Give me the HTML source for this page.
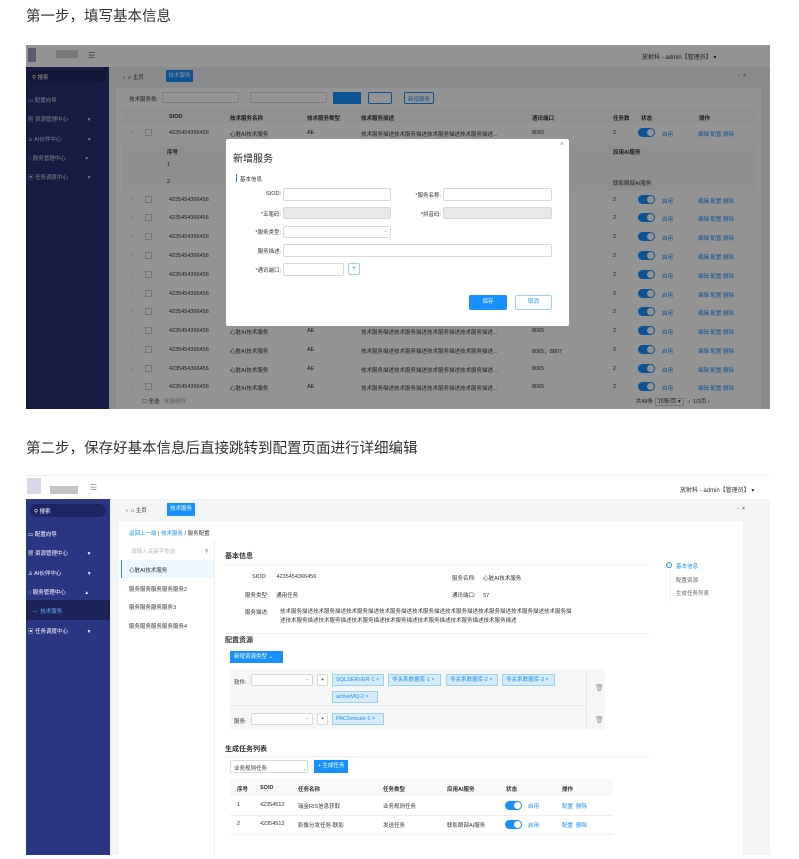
<!DOCTYPE html>
<html><head><meta charset="utf-8">
<style>
*{margin:0;padding:0;box-sizing:border-box}
body{width:799px;height:859px;background:#fff;font-family:"Liberation Sans","Noto Sans CJK SC",sans-serif;position:relative;overflow:hidden;color:#333}
.a{position:absolute;white-space:nowrap}
.s{font-size:5.5px;color:#333}
.step{font-size:14.5px;color:#333}
.blue{color:#1890ff}
.inp{position:absolute;border:1px solid #d9d9d9;background:#fff;border-radius:2px}
.tog{position:absolute;width:17px;height:9px;border-radius:5px;background:#1890ff}
.tog:after{content:"";position:absolute;right:1px;top:1px;width:7px;height:7px;border-radius:50%;background:#fff}
.tag{position:absolute;height:12px;background:#d6ebfb;border:1px solid #9ccff5;color:#1890ff;font-size:5.5px;line-height:10px;padding-left:3px;white-space:nowrap}
</style></head><body>

<div class="a step" style="left:26px;top:5px">第一步，填写基本信息</div>

<!-- TOP SCREENSHOT -->
<div class="a" style="left:26px;top:45px;width:744px;height:364px;background:#f0f2f5;overflow:hidden">
  <div class="a" style="left:0;top:0;width:744px;height:22px;background:#fff"></div>
  <div class="a" style="left:2px;top:3px;width:8px;height:14px;background:#9aa0c8"></div>
  <div class="a" style="left:30px;top:5px;width:22px;height:8px;background:#cfcfcf"></div>
  <div class="a s" style="left:62px;top:6px;font-size:8px;color:#666">☰</div>
  <div class="a s" style="left:616px;top:7px;font-size:6px">放射科 - admin【管理员】 ▾</div>
  <div class="a" style="left:0;top:22px;width:83px;height:342px;background:#283070"></div>
  <div class="a" style="left:2px;top:25px;width:78px;height:13px;border-radius:6px;background:#1f265e"></div>
  <div class="a s" style="left:6px;top:28px;color:#fff">⚲ 搜索</div>
  <div class="a s" style="left:2px;top:51px;color:#dde">▭ 配置向导</div>
  <div class="a s" style="left:2px;top:70px;color:#dde">▦ 资源管理中心 <span style="margin-left:18px">▾</span></div>
  <div class="a s" style="left:2px;top:90px;color:#dde">♙ AI伙伴中心 <span style="margin-left:25px">▾</span></div>
  <div class="a s" style="left:2px;top:109px;color:#dde">◌ 服务管理中心 <span style="margin-left:18px">▾</span></div>
  <div class="a s" style="left:2px;top:128px;color:#dde">▣ 任务调度中心 <span style="margin-left:18px">▾</span></div>
  <!-- tabs -->
  <div class="a" style="left:83px;top:22px;width:661px;height:19px;background:#eef0f3"></div>
  <div class="a s" style="left:97px;top:28px">‹ &nbsp;⌂ 主页</div>
  <div class="a" style="left:140px;top:25px;width:27px;height:12px;background:#1890ff;color:#fff;font-size:5.5px;line-height:12px;text-align:center">技术服务</div>
  <div class="a s" style="left:712px;top:28px">- &nbsp;×</div>
  <!-- content -->
  <div class="a" style="left:90px;top:43px;width:645px;height:321px;background:#fff"></div>
  <div class="a s" style="left:103px;top:50px">技术服务类:</div>
  <div class="inp" style="left:136px;top:47px;width:77px;height:11px"></div>
  <div class="inp" style="left:224px;top:47px;width:77px;height:11px"></div>
  <div class="a" style="left:307px;top:47px;width:28px;height:12px;background:#1890ff"></div>
  <div class="inp" style="left:342px;top:47px;width:24px;height:12px;border-color:#1890ff"></div>
  <div class="inp" style="left:378px;top:47px;width:30px;height:12px;border-color:#1890ff"></div>
  <div class="a s" style="left:382px;top:50px;color:#1890ff">新增服务</div>
  <div class="a" style="left:96px;top:64px;width:634px;height:14px;background:#fafafa"></div>
  <div class="a s" style="left:103px;top:69px;font-weight:bold">
    <span style="position:absolute;left:40px">SIOD</span><span style="position:absolute;left:101px">技术服务名称</span><span style="position:absolute;left:178px">技术服务类型</span><span style="position:absolute;left:232px">技术服务描述</span><span style="position:absolute;left:403px">通讯端口</span><span style="position:absolute;left:484px">任务数</span><span style="position:absolute;left:512px">状态</span><span style="position:absolute;left:570px">操作</span></div>
  <div class="a" style="left:96px;top:100px;width:634px;height:46px;background:#f7f7f7"></div>
  <div id="rows"></div>
  <div class="a s" style="left:116px;top:352px">☐ 全选 &nbsp; <span style="color:#aaa">批量删除</span></div>
  <div class="a s" style="left:610px;top:352px">共48条 <span style="border:1px solid #ccc;padding:0 2px">15条/页 ▾</span> &nbsp; ‹ &nbsp;1/3页 ›</div>
  <!-- overlay -->
  <div class="a" style="left:0;top:0;width:744px;height:364px;background:rgba(0,0,0,0.42)"></div>
</div>

<!-- Modal -->
<div class="a" style="left:226px;top:139px;width:343px;height:187px;background:#fff;border-radius:2px">
  <div class="a" style="left:7px;top:11px;font-size:10px;color:#222">新增服务</div>
  <div class="a" style="left:334px;top:2px;font-size:7px;color:#999">×</div>
  <div class="a" style="left:10px;top:35px;width:1px;height:8px;background:#1890ff"></div>
  <div class="a s" style="left:14px;top:36px">基本信息</div>
  <div class="a s" style="left:32px;top:52px;width:23px;text-align:right">SIOD:</div>
  <div class="inp" style="left:57px;top:49px;width:108px;height:13px"></div>
  <div class="a s" style="left:180px;top:52px;width:35px;text-align:right">*服务名称:</div>
  <div class="inp" style="left:217px;top:49px;width:109px;height:13px"></div>
  <div class="a s" style="left:20px;top:71px;width:35px;text-align:right">*五笔码:</div>
  <div class="inp" style="left:57px;top:68px;width:108px;height:12px;background:#e8e8e8"></div>
  <div class="a s" style="left:180px;top:71px;width:35px;text-align:right">*拼音码:</div>
  <div class="inp" style="left:217px;top:68px;width:109px;height:12px;background:#e8e8e8"></div>
  <div class="a s" style="left:18px;top:89px;width:37px;text-align:right">*服务类型:</div>
  <div class="inp" style="left:57px;top:87px;width:108px;height:12px"></div>
  <div class="a s" style="left:157px;top:89px;color:#999">⌄</div>
  <div class="a s" style="left:18px;top:108px;width:37px;text-align:right">服务描述:</div>
  <div class="inp" style="left:57px;top:105px;width:269px;height:13px"></div>
  <div class="a s" style="left:18px;top:127px;width:37px;text-align:right">*通讯端口:</div>
  <div class="inp" style="left:57px;top:124px;width:61px;height:13px"></div>
  <div class="inp" style="left:122px;top:124px;width:12px;height:12px;border-color:#9ccff5;font-size:6px;text-align:center;line-height:10px;color:#1890ff">+</div>
  <div class="a" style="left:243px;top:156px;width:38px;height:15px;background:#1890ff;border-radius:2px;color:#fff;font-size:5.5px;line-height:15px;text-align:center">保存</div>
  <div class="inp" style="left:289px;top:156px;width:37px;height:15px;border-color:#9ccff5;color:#1890ff;font-size:5.5px;line-height:13px;text-align:center">取消</div>
</div>

<div class="a step" style="left:26px;top:437px">第二步，保存好基本信息后直接跳转到配置页面进行详细编辑</div>

<!-- BOTTOM SCREENSHOT -->
<div class="a" style="left:26px;top:475px;width:744px;height:380px;background:#fff;overflow:hidden;border-top:1px solid #eee">
  <div class="a" style="left:1px;top:2px;width:14px;height:16px;background:#d8d8e8"></div>
  <div class="a" style="left:24px;top:10px;width:28px;height:8px;background:#c4c4c4"></div>
  <div class="a" style="left:64px;top:7px;font-size:8px;color:#888">☰</div>
  <div class="a s" style="left:654px;top:9px;font-size:6px">放射科 - admin【管理员】 ▾</div>
  <div class="a" style="left:0;top:23px;width:84px;height:357px;background:#2a3682"></div>
  <div class="a" style="left:4px;top:28px;width:76px;height:13px;border-radius:7px;background:#1d2563"></div>
  <div class="a s" style="left:8px;top:31px;color:#fff">⚲ 搜索</div>
  <div class="a s" style="left:2px;top:54px;color:#fff">▭ 配置向导</div>
  <div class="a s" style="left:2px;top:73px;color:#fff">▦ 资源管理中心 <span style="margin-left:18px">▾</span></div>
  <div class="a s" style="left:2px;top:93px;color:#fff">♙ AI伙伴中心 <span style="margin-left:25px">▾</span></div>
  <div class="a s" style="left:2px;top:112px;color:#fff">◌ 服务管理中心 <span style="margin-left:18px">▴</span></div>
  <div class="a" style="left:0;top:124px;width:84px;height:20px;background:#1c2358"></div>
  <div class="a s" style="left:6px;top:131px;color:#5fb0ff">-○ &nbsp;技术服务</div>
  <div class="a s" style="left:2px;top:151px;color:#fff">▣ 任务调度中心 <span style="margin-left:18px">▾</span></div>
  <div class="a" style="left:84px;top:23px;width:660px;height:20px;background:#f3f4f6"></div>
  <div class="a s" style="left:100px;top:30px">‹ &nbsp;⌂ 主页</div>
  <div class="a" style="left:141px;top:27px;width:28px;height:13px;background:#1890ff;color:#fff;font-size:5.5px;line-height:13px;text-align:center">技术服务</div>
  <div class="a s" style="left:711px;top:30px">- &nbsp;×</div>
  <div class="a" style="left:84px;top:43px;width:660px;height:337px;background:#f3f4f6"></div>
  <div class="a" style="left:93px;top:45px;width:624px;height:335px;background:#fff"></div>
  <div class="a s" style="left:103px;top:53px"><span class="blue">返回上一级</span> | <span class="blue">技术服务</span> / 服务配置</div>
  <div class="a" style="left:95px;top:64px;width:94px;height:316px;background:#fff;border-right:1px solid #eee"></div>
  <div class="a s" style="left:105px;top:71px;color:#bbb">请输入关键字查询 <span style="margin-left:28px;color:#888">⚲</span></div>
  <div class="a" style="left:95px;top:84px;width:93px;height:18px;background:#eef6fe;border-left:1px solid #1890ff"></div>
  <div class="a s" style="left:103px;top:90px">心脏AI技术服务</div>
  <div class="a s" style="left:103px;top:109px">服务服务服务服务服务2</div>
  <div class="a s" style="left:103px;top:127px">服务服务服务服务3</div>
  <div class="a s" style="left:103px;top:146px">服务服务服务服务服务4</div>
  <div class="a" style="left:199px;top:75px;font-size:7px;font-weight:bold">基本信息</div>
  <div class="a" style="left:199px;top:88px;width:424px;height:1px;background:#eee"></div>
  <div class="a s" style="left:226px;top:98px">SIOD: <span style="margin-left:8px">4235454366456</span></div>
  <div class="a s" style="left:426px;top:98px">服务名称: <span style="margin-left:6px">心脏AI技术服务</span></div>
  <div class="a s" style="left:219px;top:115px">服务类型: <span style="margin-left:6px">通用任务</span></div>
  <div class="a s" style="left:426px;top:115px">通讯端口: <span style="margin-left:6px">57</span></div>
  <div class="a s" style="left:219px;top:132px">服务描述:</div>
  <div class="a s" style="left:254px;top:132px;line-height:9px">技术服务描述技术服务描述技术服务描述技术服务描述技术服务描述技术服务描述技术服务描述技术服务描述技术服务描<br>述技术服务描述技术服务描述技术服务描述技术服务描述技术服务描述技术服务描述技术服务描述</div>
  <div class="a" style="left:199px;top:157px;width:424px;height:1px;background:#eee"></div>
  <div class="a" style="left:199px;top:159px;font-size:7px;font-weight:bold">配置资源</div>
  <div class="a" style="left:204px;top:175px;width:53px;height:12px;background:#1890ff;color:#fff;font-size:5.5px;line-height:12px;padding-left:4px">新增资源类型 ⌄</div>
  <div class="a" style="left:204px;top:193px;width:375px;height:61px;background:#f6f7f9"></div>
  <div class="a" style="left:560px;top:193px;width:1px;height:61px;background:#e8e8e8"></div>
  <div class="a" style="left:204px;top:229px;width:356px;height:1px;background:#e8e8e8"></div>
  <div class="a s" style="left:208px;top:202px">软件:</div>
  <div class="inp" style="left:225px;top:198px;width:62px;height:12px"></div>
  <div class="a s" style="left:279px;top:200px;color:#999">⌄</div>
  <div class="inp" style="left:291px;top:198px;width:11px;height:12px;font-size:5.5px;text-align:center;line-height:10px">+</div>
  <div class="tag" style="left:306px;top:198px;width:52px">SQLSERVER-1 ×</div>
  <div class="tag" style="left:362px;top:198px;width:53px">非关系数据库-1 ×</div>
  <div class="tag" style="left:420px;top:198px;width:52px">非关系数据库-2 ×</div>
  <div class="tag" style="left:476px;top:198px;width:53px">非关系数据库-3 ×</div>
  <div class="tag" style="left:306px;top:215px;width:46px">activeMQ-2 ×</div>
  <div class="a s" style="left:569px;top:208px;color:#999;font-size:7px">🗑</div>
  <div class="a s" style="left:208px;top:241px">服务:</div>
  <div class="inp" style="left:225px;top:237px;width:62px;height:12px"></div>
  <div class="a s" style="left:279px;top:239px;color:#999">⌄</div>
  <div class="inp" style="left:291px;top:237px;width:11px;height:12px;font-size:5.5px;text-align:center;line-height:10px">+</div>
  <div class="tag" style="left:306px;top:237px;width:52px">PACSmoule-1 ×</div>
  <div class="a s" style="left:569px;top:240px;color:#999;font-size:7px">🗑</div>
  <div class="a" style="left:199px;top:268px;font-size:7px;font-weight:bold">生成任务列表</div>
  <div class="a" style="left:199px;top:280px;width:424px;height:1px;background:#eee"></div>
  <div class="inp" style="left:204px;top:284px;width:78px;height:13px"></div>
  <div class="a s" style="left:208px;top:288px">业务规则任务 <span style="margin-left:34px;color:#999">⌄</span></div>
  <div class="a" style="left:288px;top:284px;width:34px;height:13px;background:#1890ff;color:#fff;font-size:5.5px;line-height:13px;text-align:center">+ 生成任务</div>
  <div class="a" style="left:204px;top:303px;width:383px;height:17px;background:#f7f8fa"></div>
  <div class="a s" style="left:211px;top:309px;font-weight:bold"><span style="position:absolute;left:0">序号</span><span style="position:absolute;left:23px">SOID</span><span style="position:absolute;left:61px">任务名称</span><span style="position:absolute;left:146px">任务类型</span><span style="position:absolute;left:210px">应用AI服务</span><span style="position:absolute;left:269px">状态</span><span style="position:absolute;left:325px">操作</span></div>
  <div class="a" style="left:204px;top:339px;width:383px;height:1px;background:#eee"></div>
  <div class="a" style="left:204px;top:358px;width:383px;height:1px;background:#eee"></div>
  <div class="a s" style="left:211px;top:326px"><span style="position:absolute;left:0">1</span><span style="position:absolute;left:23px">42354512</span><span style="position:absolute;left:61px">瑞金RIS信息获取</span><span style="position:absolute;left:146px">业务规则任务</span><span style="position:absolute;left:291px" class="blue">启用</span><span style="position:absolute;left:325px" class="blue">配置 &nbsp;删除</span></div>
  <div class="tog" style="left:479px;top:325px"></div>
  <div class="a s" style="left:211px;top:345px"><span style="position:absolute;left:0">2</span><span style="position:absolute;left:23px">42354513</span><span style="position:absolute;left:61px">影像分发任务-联影</span><span style="position:absolute;left:146px">发送任务</span><span style="position:absolute;left:210px">联影眼部AI服务</span><span style="position:absolute;left:291px" class="blue">启用</span><span style="position:absolute;left:325px" class="blue">配置 &nbsp;删除</span></div>
  <div class="tog" style="left:479px;top:344px"></div>
  <!-- anchor -->
  <div class="a" style="left:644px;top:84px;width:1px;height:42px;background:#eee"></div>
  <div class="a" style="left:640px;top:86px;width:6px;height:6px;border:1.5px solid #1890ff;border-radius:50%;background:#fff"></div>
  <div class="a s" style="left:650px;top:86px;color:#1890ff">基本信息</div>
  <div class="a s" style="left:650px;top:100px;color:#666">配置资源</div>
  <div class="a s" style="left:650px;top:113px;color:#666">生成任务列表</div>
</div>

<script>
(function(){
var c=document.getElementById('rows'),h='';
var ys=[133,200,218,237,256,275,294,312,331,350,369,387];
for(var i=0;i<ys.length;i++){
 var y=ys[i]-45-3;
 h+='<div class="a s" style="left:105px;top:'+y+'px;color:#999">›</div><div class="a" style="left:119px;top:'+(y-1)+'px;width:7px;height:7px;border:1px solid #ccc;background:#fff"></div>';
 h+='<div class="a s" style="left:143px;top:'+y+'px">4235454366456</div>';
 h+='<div class="a s" style="left:204px;top:'+y+'px">心脏AI技术服务</div><div class="a s" style="left:281px;top:'+y+'px">AE</div><div class="a s" style="left:335px;top:'+y+'px">技术服务描述技术服务描述技术服务描述技术服务描述...</div><div class="a s" style="left:506px;top:'+y+'px">'+(i==9?'8065，8807':'8065')+'</div>';
 h+='<div class="a s" style="left:587px;top:'+y+'px">2</div><div class="tog" style="left:612px;top:'+(y-2)+'px"></div><div class="a s blue" style="left:636px;top:'+y+'px">启用</div><div class="a s blue" style="left:672px;top:'+y+'px">编辑 配置 删除</div>';
 if(i==0){h+='<div class="a s" style="left:141px;top:103px;font-weight:bold">序号</div><div class="a s" style="left:141px;top:117px">1</div><div class="a s" style="left:141px;top:134px">2</div><div class="a s" style="left:587px;top:103px;font-weight:bold">应用AI服务</div><div class="a s" style="left:587px;top:134px">联影眼部AI服务</div>';}
}
c.outerHTML=h;
})();
</script>
</body></html>
